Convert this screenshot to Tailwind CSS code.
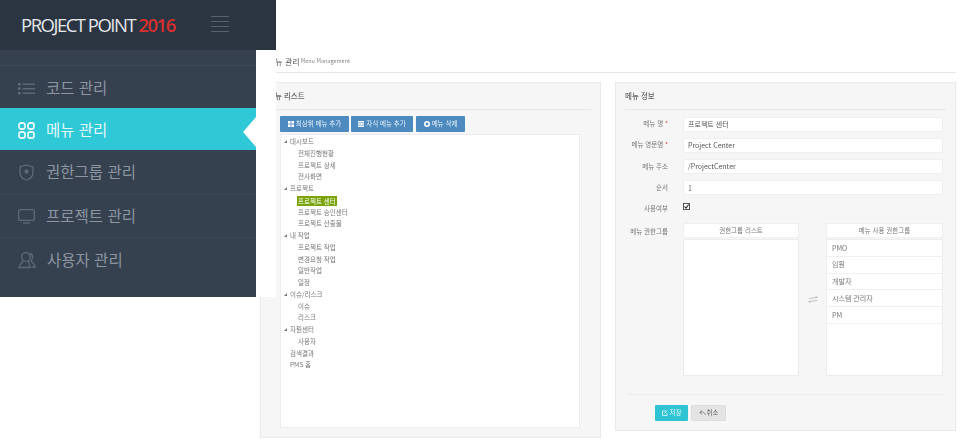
<!DOCTYPE html>
<html lang="ko">
<head>
<meta charset="UTF-8">
<title>Project Point 2016</title>
<script src="https://cdn.jsdelivr.net/npm/@tailwindcss/browser@4"></script>
</head>
<body class="bg-white font-['Noto_Sans_CJK_KR','Noto_Sans',sans-serif] text-[#555]">
<div class="relative w-[961px] h-[442px] overflow-hidden blur-[0.4px]">

  <!-- main -->
  <div class="pl-[260px] pr-[5px] pt-[50px]">
    <div class="h-[23px] border-b border-[#e6e6e6] flex items-center pl-[8px]">
      <span class="text-[8px] leading-none text-[#555] whitespace-nowrap mt-[1px]">메뉴 관리</span>
      <span class="text-[5.5px] leading-none text-[#888] whitespace-nowrap mt-[1px] ml-[1px]">Menu Management</span>
    </div>
    <div class="flex gap-[14px] items-start mt-[9px]">
      <!-- menu list -->
      <section class="w-[341px] h-[356px] bg-[#f6f6f6] border border-[#e9e9e9] flex flex-col">
        <div class="w-[323px] ml-[7px] h-[27px] border-b border-[#e6e6e6] flex items-center text-[7.5px] font-medium text-[#666]">메뉴 리스트</div>
        <div class="flex gap-[2px] pl-[19px] mt-[6px]">
          <button class="w-[69px] h-[16px] bg-[#4d8ac0] rounded-[1px] text-[#e8f0f7] text-[6.5px] flex items-center justify-center gap-[2px]">
            <svg class="w-[6px] h-[6px]" viewBox="0 0 6 6" fill="#fff"><rect width="2.6" height="2.6"/><rect x="3.4" width="2.6" height="2.6"/><rect y="3.4" width="2.6" height="2.6"/><rect x="3.4" y="3.4" width="2.6" height="2.6"/></svg>
            최상위 메뉴 추가
          </button>
          <button class="w-[62px] h-[16px] bg-[#4d8ac0] rounded-[1px] text-[#e8f0f7] text-[6.5px] flex items-center justify-center gap-[2px]">
            <svg class="w-[6px] h-[6px]" viewBox="0 0 6 6" fill="#fff"><rect width="6" height="1.5"/><rect y="2.2" width="6" height="1.5"/><rect y="4.4" width="6" height="1.5"/></svg>
            자식 메뉴 추가
          </button>
          <button class="w-[49px] h-[16px] ml-[1px] bg-[#4d8ac0] rounded-[1px] text-[#e8f0f7] text-[6.5px] flex items-center justify-center gap-[2px]">
            <svg class="w-[6px] h-[6px]" viewBox="0 0 6 6" fill="none" stroke="#fff" stroke-width="1.6"><circle cx="3" cy="3" r="2.2"/></svg>
            메뉴 삭제
          </button>
        </div>
        <div class="w-[300px] h-[294px] ml-[19px] mt-[2px] bg-white border border-[#ececec] pt-[1px] text-[6.5px] text-[#777] leading-[11.75px]">
          <div class="h-[11.75px] pl-[3px] flex items-center gap-[3px]"><svg class="w-[3px] h-[3px]" viewBox="0 0 3 3" fill="#777"><path d="M3 0V3H0Z"/></svg>대시보드</div>
          <div class="h-[11.75px] pl-[17px]">전체진행현황</div>
          <div class="h-[11.75px] pl-[17px]">프로젝트 상세</div>
          <div class="h-[11.75px] pl-[17px]">전사화면</div>
          <div class="h-[11.75px] pl-[3px] flex items-center gap-[3px]"><svg class="w-[3px] h-[3px]" viewBox="0 0 3 3" fill="#777"><path d="M3 0V3H0Z"/></svg>프로젝트</div>
          <div class="h-[11.75px] pl-[16px] flex items-center"><span class="block bg-[#7ba40c] text-white pl-[1px] w-[40px] h-[10px] leading-[10px] whitespace-nowrap">프로젝트 센터</span></div>
          <div class="h-[11.75px] pl-[17px]">프로젝트 승인센터</div>
          <div class="h-[11.75px] pl-[17px]">프로젝트 산출물</div>
          <div class="h-[11.75px] pl-[3px] flex items-center gap-[3px]"><svg class="w-[3px] h-[3px]" viewBox="0 0 3 3" fill="#777"><path d="M3 0V3H0Z"/></svg>내 작업</div>
          <div class="h-[11.75px] pl-[17px]">프로젝트 작업</div>
          <div class="h-[11.75px] pl-[17px]">변경요청 작업</div>
          <div class="h-[11.75px] pl-[17px]">일반작업</div>
          <div class="h-[11.75px] pl-[17px]">일정</div>
          <div class="h-[11.75px] pl-[3px] flex items-center gap-[3px]"><svg class="w-[3px] h-[3px]" viewBox="0 0 3 3" fill="#777"><path d="M3 0V3H0Z"/></svg>이슈/리스크</div>
          <div class="h-[11.75px] pl-[17px]">이슈</div>
          <div class="h-[11.75px] pl-[17px]">리스크</div>
          <div class="h-[11.75px] pl-[3px] flex items-center gap-[3px]"><svg class="w-[3px] h-[3px]" viewBox="0 0 3 3" fill="#777"><path d="M3 0V3H0Z"/></svg>자원센터</div>
          <div class="h-[11.75px] pl-[17px]">사용자</div>
          <div class="h-[11.75px] pl-[9px]">검색결과</div>
          <div class="h-[11.75px] pl-[9px]">PMS 홈</div>
        </div>
      </section>

      <!-- menu info -->
      <section class="w-[341px] h-[349px] bg-[#f6f6f6] border border-[#e9e9e9] pl-[8px] flex flex-col">
        <div class="w-[321px] ml-[1px] h-[27px] border-b border-[#e6e6e6] flex items-center text-[7.5px] font-medium text-[#666]">메뉴 정보</div>
        <div class="grid grid-cols-[44px_260px] gap-x-[15px] gap-y-[6.3px] mt-[6.5px] text-[6.5px] text-[#777] items-center">
          <label class="text-right whitespace-nowrap">메뉴 명 <span class="text-[#e33]">*</span></label>
          <div class="h-[15px] bg-white border border-[#efefef] pl-[4px] flex items-center text-[#555] text-[7px]">프로젝트 센터</div>
          <label class="text-right whitespace-nowrap">메뉴 영문명 <span class="text-[#e33]">*</span></label>
          <div class="h-[15px] bg-white border border-[#efefef] pl-[4px] flex items-center text-[#555] text-[7px]">Project Center</div>
          <label class="text-right whitespace-nowrap">메뉴 주소</label>
          <div class="h-[15px] bg-white border border-[#efefef] pl-[4px] flex items-center text-[#555] text-[7px]">/ProjectCenter</div>
          <label class="text-right whitespace-nowrap">순서</label>
          <div class="h-[15px] bg-white border border-[#efefef] pl-[4px] flex items-center text-[#666] text-[7px]">1</div>
          <label class="text-right whitespace-nowrap">사용여부</label>
          <div class="h-[15px] flex items-start">
            <svg class="w-[7px] h-[7px] mt-[1px]" viewBox="0 0 7 7"><rect x=".5" y=".5" width="6" height="6" fill="#fff" stroke="#555"/><path d="M1.5 3.5 3 5.2 5.6 1.5" fill="none" stroke="#222" stroke-width="1.1"/></svg>
          </div>
          <label class="text-right whitespace-nowrap self-start pt-[4px]">메뉴 권한그룹</label>
          <div class="flex justify-between items-center">
            <div class="w-[116px]">
              <div class="h-[15px] mb-[1px] bg-white border border-[#efefef] flex items-center justify-center">권한그룹 리스트</div>
              <div class="h-[137px] bg-white border border-[#ececec]"></div>
            </div>
            <svg class="w-[10px] h-[7px]" viewBox="0 0 10 7" fill="none" stroke="#aaa" stroke-width=".7"><path d="M1 2.500 9.500 1.500 7.500 .3M9 4.500.5 5.500 2.500 6.700"/></svg>
            <div class="w-[117px]">
              <div class="h-[15px] mb-[1px] bg-white border border-[#efefef] flex items-center justify-center">메뉴 사용 권한그룹</div>
              <ul class="h-[137px] bg-white border border-[#ececec] text-[7px]">
                <li class="h-[16.800px] pl-[5px] flex items-center border-b border-[#f0f0f0]">PMO</li>
                <li class="h-[16.800px] pl-[5px] flex items-center border-b border-[#f0f0f0]">임원</li>
                <li class="h-[16.800px] pl-[5px] flex items-center border-b border-[#f0f0f0]">개발자</li>
                <li class="h-[16.800px] pl-[5px] flex items-center border-b border-[#f0f0f0]">시스템 관리자</li>
                <li class="h-[16.800px] pl-[5px] flex items-center border-b border-[#f0f0f0]">PM</li>
              </ul>
            </div>
          </div>
        </div>
        <div class="w-[315px] ml-[4px] mt-[18px] border-t border-[#ececec] pt-[10px] pl-[27px] flex gap-[3px] text-[6.5px]">
          <button class="w-[33px] h-[16px] bg-[#2ec4d3] rounded-[1px] text-[#e6f9fb] flex items-center justify-center gap-[2px]">
            <svg class="w-[6px] h-[6px]" viewBox="0 0 6 6" fill="none" stroke="#fff" stroke-width=".7"><path d="M4 1H.5V5.500H5V3M2.500 3.500 5.500 .5"/></svg>
            저장
          </button>
          <button class="w-[35px] h-[16px] bg-[#e4e4e4] border border-[#ddd] rounded-[1px] text-[#666] flex items-center justify-center gap-[1px]">
            <svg class="w-[7px] h-[6px]" viewBox="0 0 7 6" fill="none" stroke="#666" stroke-width=".7"><path d="M3 .5 .8 2.500 3 4.500M.8 2.500C3 1.500 5.500 2 6.500 5"/></svg>
            취소
          </button>
        </div>
      </section>
    </div>
  </div>

  <!-- sidebar, lies over the page -->
  <aside class="absolute left-0 top-0 w-[276px] h-[297px] bg-white">
    <div class="h-[50px] bg-[#2b3542] flex items-center pl-[21px]">
      <span class="font-['Open_Sans',sans-serif] text-[18.5px] tracking-[-1.5px] text-[#e4e6e8] leading-none whitespace-nowrap">PROJECT POINT <b class="text-[#d8302f] font-semibold">2016</b></span>
      <svg class="w-[18px] h-[16px] ml-[36px] -mt-[2px]" viewBox="0 0 18 16" stroke="#56606d" stroke-width="1"><path d="M0 .5H18M0 5.500H18M0 10.500H18M0 15.500H18"/></svg>
    </div>
    <nav class="w-[256px] h-[247px] bg-[#364150] text-[15.5px] text-[#8c95a0]">
      <div class="h-[16px] border-b border-[#3f4a59]"></div>
      <a class="h-[42px] flex items-center pl-[18px] pt-[2px] gap-[11px]">
        <svg class="w-[17px] h-[13px]" viewBox="0 0 17 13" fill="#5f6b79"><rect y="1" width="2.500" height="2.500"/><rect y="5.500" width="2.500" height="2.500"/><rect y="10" width="2.500" height="2.500"/><rect x="4.500" y="1.500" width="12.500" height="1.400"/><rect x="4.500" y="6" width="12.500" height="1.400"/><rect x="4.500" y="10.500" width="12.500" height="1.400"/></svg>
        코드 관리
      </a>
      <a class="relative h-[42px] bg-[#2ec8d6] text-[#e3f8fa] flex items-center pl-[18px] pt-[2px] gap-[11px]">
        <svg class="w-[17px] h-[17px]" viewBox="0 0 17 17" fill="none" stroke="#e3f8fa" stroke-width="1.800"><rect x="1" y="1" width="6" height="6" rx="2"/><rect x="10" y="1" width="6" height="6" rx="2"/><rect x="1" y="10" width="6" height="6" rx="2"/><rect x="10" y="10" width="6" height="6" rx="2"/></svg>
        메뉴 관리
        <svg class="absolute right-0 top-[9px] w-[13px] h-[30px]" viewBox="0 0 13 30" fill="#fff"><path d="M13 0V30L0 15Z"/></svg>
      </a>
      <a class="h-[45px] flex items-center pl-[18px] gap-[11px] border-b border-[#3d4857]">
        <svg class="w-[17px] h-[17px]" viewBox="0 0 17 17" fill="none" stroke="#5f6b79" stroke-width="1.300"><path d="M8.500 1 15 3V9C15 12.500 11.500 15 8.500 16 5.500 15 2 12.500 2 9V3Z"/><circle cx="8.500" cy="7.500" r="1.500" fill="#5f6b79"/></svg>
        권한그룹 관리
      </a>
      <a class="h-[43px] flex items-center pl-[18px] gap-[11px] border-b border-[#3d4857]">
        <svg class="w-[17px] h-[15px]" viewBox="0 0 17 15" fill="none" stroke="#5f6b79" stroke-width="1.300"><rect x=".7" y=".7" width="15.600" height="10.600" rx="1"/><path d="M5 14H12"/></svg>
        프로젝트 관리
      </a>
      <a class="h-[44px] flex items-center pl-[18px] gap-[11px]">
        <svg class="w-[18px] h-[18px]" viewBox="0 0 18 18" fill="none" stroke="#5f6b79" stroke-width="1.300"><circle cx="8" cy="6" r="4.300"/><path d="M5 10C4.500 12 1.500 12.500 1 16.500H12C12 13.500 10 12 10.500 10M12 2.500C15 3 15.500 8 13 10 14 12 17 12.500 17 16H13.500"/></svg>
        사용자 관리
      </a>
    </nav>
  </aside>
</div>
</body>
</html>
